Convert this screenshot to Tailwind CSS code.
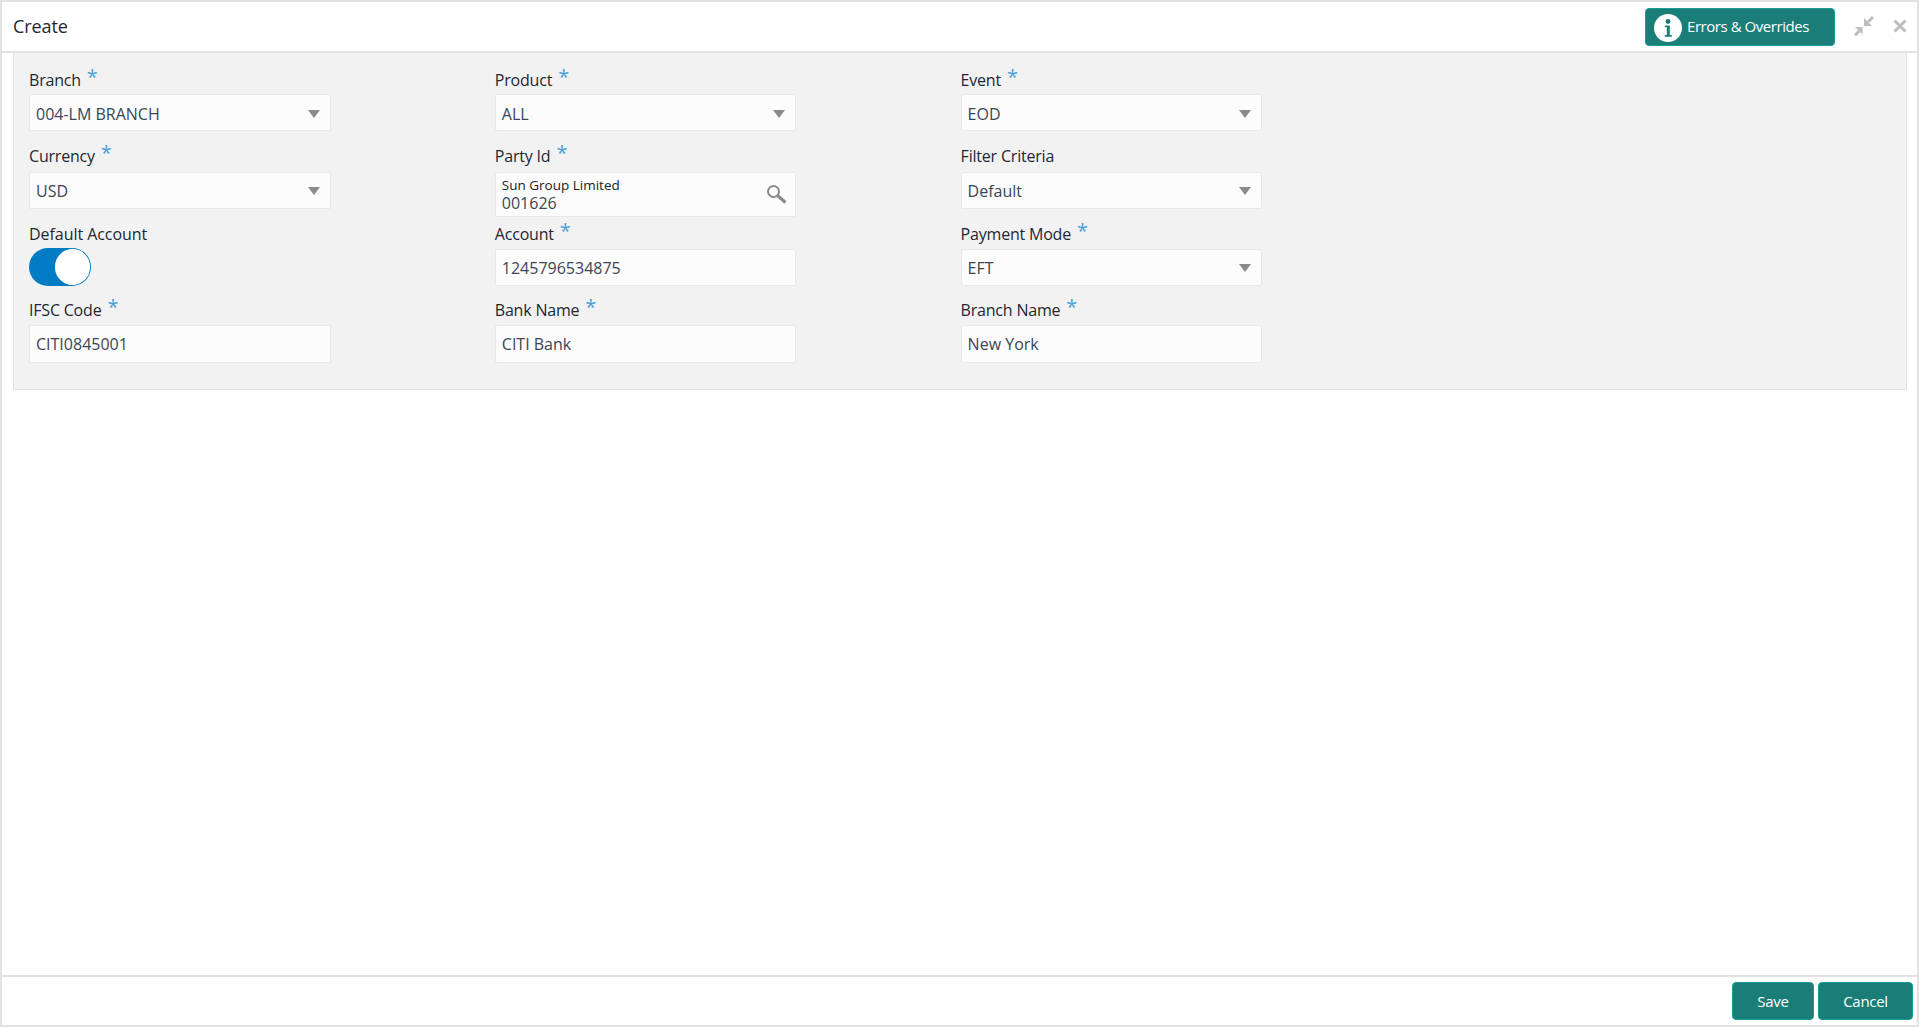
<!DOCTYPE html>
<html>
<head>
<meta charset="utf-8">
<script src="https://cdn.jsdelivr.net/npm/@tailwindcss/browser@4"></script>
</head>
<body class="bg-white">
<div class="relative w-[1919px] h-[1027px] flex flex-col border-2 border-[#e2e2e2] bg-white font-['Open_Sans',sans-serif] overflow-hidden">
  <header class="h-[51px] shrink-0 flex items-center border-b-2 border-[#e2e5e5] pl-[11px]">
    <h1 class="text-[18px] text-[#1c2733] font-normal tracking-[-0.1px]">Create</h1>
    <div class="ml-auto mr-[82px] w-[190px] h-[38px] flex items-center rounded-[4px] bg-[#1a7d77] border border-[#15a093] pl-[8px] gap-[5px]">
      <svg width="28" height="28" viewBox="0 0 28 28" class="mt-[2px]"><circle cx="14" cy="14" r="14" fill="#fff"/><circle cx="14" cy="7.500" r="2.400" fill="#1a7d77"/><path d="M10.800 11.500h5v9.500h2v1.800h-7v-1.800h2v-7.700h-2z" fill="#1a7d77"/></svg>
      <span class="text-[15px] text-white tracking-[-0.45px] whitespace-nowrap">Errors &amp; Overrides</span>
    </div>
  </header>
  <div class="absolute left-[1852px] top-[14px] flex items-center gap-[19px]">
    <svg width="20" height="20" viewBox="0 0 20 20" fill="#bdbdbd" stroke="none"><path d="M10 2v8h8z"/><path d="M14 6l5-5" stroke="#bdbdbd" stroke-width="3"/><path d="M1 11h7.500v7.500z"/><path d="M5 15l-4 4.500" stroke="#bdbdbd" stroke-width="3"/></svg>
    <svg width="14" height="14" viewBox="0 0 14 14" stroke="#bdbdbd" stroke-width="3"><path d="M1.500 1.500l11 11M12.500 1.500l-11 11"/></svg>
  </div>
  <main class="flex-1 pl-[11px] pr-[10px]">
    <section class="h-[337px] bg-[#f2f2f2] border border-t-0 border-[#e2e2e2] pl-[15px] pt-[8px] grid grid-cols-[301.500px_301.500px_301.500px] gap-x-[164.300px] grid-rows-[78px_77px_76px_70px]">
      <div>
        <label class="h-[33px] pt-[5px] flex items-center text-[16px] text-[#1d2733] tracking-[-0.2px]">Branch<span class="text-[#4a9fd8] text-[20px] ml-[6px] -mt-[6px] leading-none">*</span></label>
        <div class="h-[37px] flex items-center justify-between pl-[6px] pr-[7px] pt-[2px] bg-[#fcfcfc] border border-[#e8e8e8] rounded-[2px] text-[16px] text-[#3a4654]">004-LM BRANCH<svg width="12" height="8" viewBox="0 0 12 8" class="mr-[3px]"><path d="M0 0h12l-6 8z" fill="#8a8a8a"/></svg></div>
      </div>
      <div>
        <label class="h-[33px] pt-[5px] flex items-center text-[16px] text-[#1d2733] tracking-[-0.2px]">Product<span class="text-[#4a9fd8] text-[20px] ml-[6px] -mt-[6px] leading-none">*</span></label>
        <div class="h-[37px] flex items-center justify-between pl-[6px] pr-[7px] pt-[2px] bg-[#fcfcfc] border border-[#e8e8e8] rounded-[2px] text-[16px] text-[#3a4654]">ALL<svg width="12" height="8" viewBox="0 0 12 8" class="mr-[3px]"><path d="M0 0h12l-6 8z" fill="#8a8a8a"/></svg></div>
      </div>
      <div>
        <label class="h-[33px] pt-[5px] flex items-center text-[16px] text-[#1d2733] tracking-[-0.2px]">Event<span class="text-[#4a9fd8] text-[20px] ml-[6px] -mt-[6px] leading-none">*</span></label>
        <div class="h-[37px] flex items-center justify-between pl-[6px] pr-[7px] pt-[2px] bg-[#fcfcfc] border border-[#e8e8e8] rounded-[2px] text-[16px] text-[#3a4654]">EOD<svg width="12" height="8" viewBox="0 0 12 8" class="mr-[3px]"><path d="M0 0h12l-6 8z" fill="#8a8a8a"/></svg></div>
      </div>

      <div>
        <label class="h-[33px] flex items-center text-[16px] text-[#1d2733] tracking-[-0.2px]">Currency<span class="text-[#4a9fd8] text-[20px] ml-[6px] -mt-[6px] leading-none">*</span></label>
        <div class="h-[37px] flex items-center justify-between pl-[6px] pr-[7px] bg-[#fcfcfc] border border-[#e8e8e8] rounded-[2px] text-[16px] text-[#3a4654]">USD<svg width="12" height="8" viewBox="0 0 12 8" class="mr-[3px]"><path d="M0 0h12l-6 8z" fill="#8a8a8a"/></svg></div>
      </div>
      <div>
        <label class="h-[33px] flex items-center text-[16px] text-[#1d2733] tracking-[-0.2px]">Party Id<span class="text-[#4a9fd8] text-[20px] ml-[6px] -mt-[6px] leading-none">*</span></label>
        <div class="h-[45px] flex items-center justify-between pl-[6px] pr-[7px] bg-[#fcfcfc] border border-[#e8e8e8] rounded-[2px]">
          <div class="flex flex-col">
            <span class="text-[13.500px] leading-[16px] text-[#222]">Sun Group Limited</span>
            <span class="text-[16px] leading-[20px] text-[#3a4654]">001626</span>
          </div>
          <svg width="20" height="20" viewBox="0 0 20 20" fill="none" stroke="#8a8a8a" class="mr-[1px] -mt-[2px]"><circle cx="6.500" cy="7.500" r="5.500" stroke-width="2"/><path d="M10.500 11.500l8 7" stroke-width="3"/></svg>
        </div>
      </div>
      <div>
        <label class="h-[33px] flex items-center text-[16px] text-[#1d2733] tracking-[-0.2px]">Filter Criteria</label>
        <div class="h-[37px] flex items-center justify-between pl-[6px] pr-[7px] bg-[#fcfcfc] border border-[#e8e8e8] rounded-[2px] text-[16px] text-[#3a4654]">Default<svg width="12" height="8" viewBox="0 0 12 8" class="mr-[3px]"><path d="M0 0h12l-6 8z" fill="#8a8a8a"/></svg></div>
      </div>

      <div>
        <label class="h-[32px] pt-[4px] flex items-center text-[16px] text-[#1d2733] tracking-[-0.05px]">Default Account</label>
        <div class="w-[62px] h-[38px] rounded-full bg-[#007cc4] relative">
          <span class="absolute right-[1px] top-[1px] w-[35px] h-[36px] rounded-full bg-white"></span>
        </div>
      </div>
      <div>
        <label class="h-[33px] pt-[2px] flex items-center text-[16px] text-[#1d2733] tracking-[-0.2px]">Account<span class="text-[#4a9fd8] text-[20px] ml-[6px] -mt-[6px] leading-none">*</span></label>
        <div class="h-[37px] flex items-center pl-[6px] pr-[7px] bg-[#fcfcfc] border border-[#e8e8e8] rounded-[2px] text-[16px] text-[#3a4654]">1245796534875</div>
      </div>
      <div>
        <label class="h-[33px] pt-[2px] flex items-center text-[16px] text-[#1d2733] tracking-[-0.2px]">Payment Mode<span class="text-[#4a9fd8] text-[20px] ml-[6px] -mt-[6px] leading-none">*</span></label>
        <div class="h-[37px] flex items-center justify-between pl-[6px] pr-[7px] bg-[#fcfcfc] border border-[#e8e8e8] rounded-[2px] text-[16px] text-[#3a4654]">EFT<svg width="12" height="8" viewBox="0 0 12 8" class="mr-[3px]"><path d="M0 0h12l-6 8z" fill="#8a8a8a"/></svg></div>
      </div>

      <div>
        <label class="h-[33px] pt-[2px] flex items-center text-[16px] text-[#1d2733] tracking-[-0.2px]">IFSC Code<span class="text-[#4a9fd8] text-[20px] ml-[6px] -mt-[6px] leading-none">*</span></label>
        <div class="h-[38px] flex items-center pl-[6px] pr-[7px] bg-[#fcfcfc] border border-[#e8e8e8] rounded-[2px] text-[16px] text-[#3a4654]">CITI0845001</div>
      </div>
      <div>
        <label class="h-[33px] pt-[2px] flex items-center text-[16px] text-[#1d2733] tracking-[-0.2px]">Bank Name<span class="text-[#4a9fd8] text-[20px] ml-[6px] -mt-[6px] leading-none">*</span></label>
        <div class="h-[38px] flex items-center pl-[6px] pr-[7px] bg-[#fcfcfc] border border-[#e8e8e8] rounded-[2px] text-[16px] text-[#3a4654]">CITI Bank</div>
      </div>
      <div>
        <label class="h-[33px] pt-[2px] flex items-center text-[16px] text-[#1d2733] tracking-[-0.2px]">Branch Name<span class="text-[#4a9fd8] text-[20px] ml-[6px] -mt-[6px] leading-none">*</span></label>
        <div class="h-[38px] flex items-center pl-[6px] pr-[7px] bg-[#fcfcfc] border border-[#e8e8e8] rounded-[2px] text-[16px] text-[#3a4654]">New York</div>
      </div>
    </section>
  </main>
  <footer class="h-[50px] shrink-0 border-t-2 border-[#e2e2e2] flex items-center justify-end gap-[4px] pr-[4px]">
    <button class="w-[82px] h-[38px] rounded-[4px] bg-[#1a7d77] border border-[#15a093] text-white text-[15px] tracking-[-0.3px]">Save</button>
    <button class="w-[95px] h-[38px] rounded-[4px] bg-[#1a7d77] border border-[#15a093] text-white text-[15px] tracking-[-0.3px]">Cancel</button>
  </footer>
</div>
</body>
</html>
